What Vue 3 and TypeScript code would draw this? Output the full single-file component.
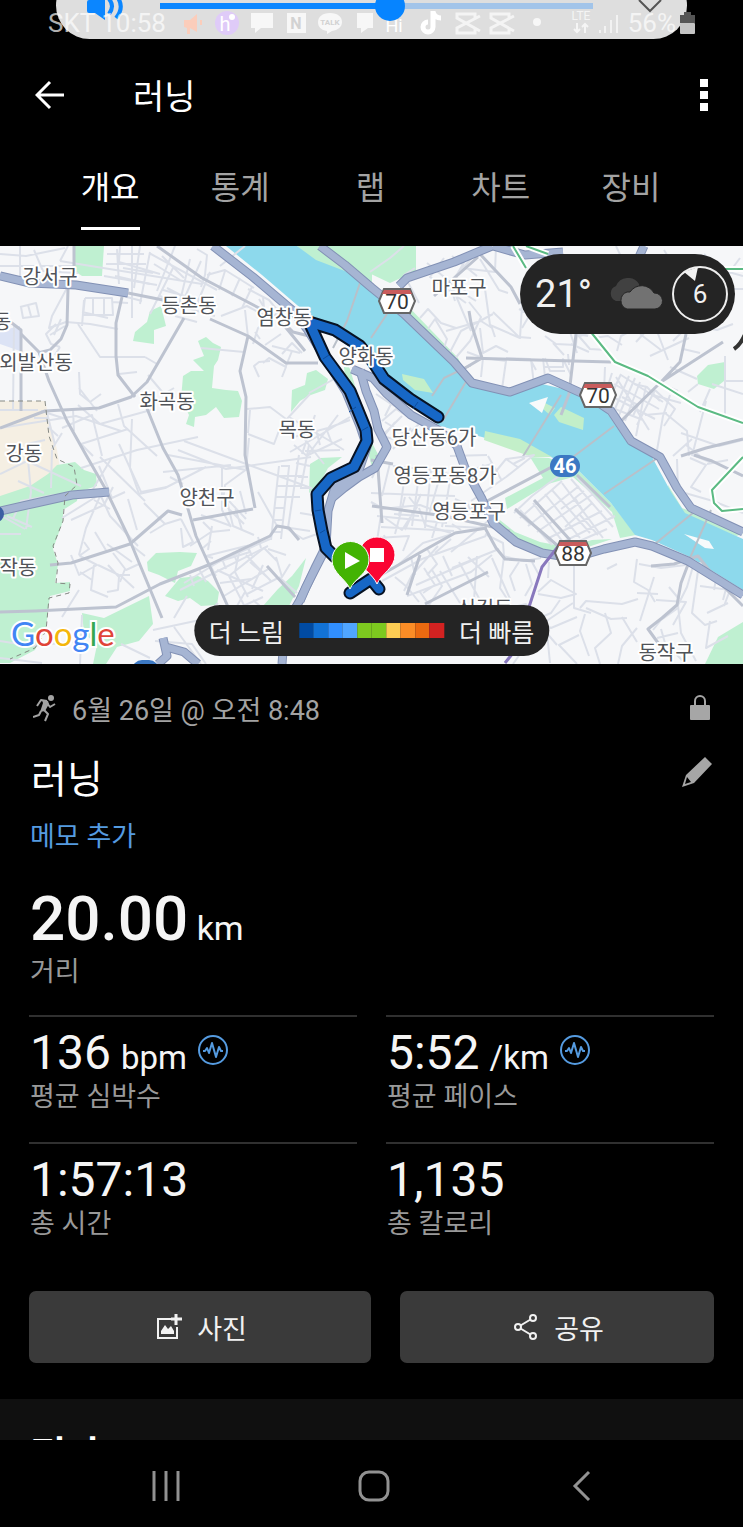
<script setup lang="ts">
import { computed, ref } from 'vue'

interface Place { x: number; y: number; name: string }
interface Stat { value: string; unit?: string; label: string; sensor?: boolean }

const tabs = ['개요', '통계', '랩', '차트', '장비']
const activeTab = ref('개요')

const volume = ref(8)
const volumeMax = 15
const volumeFill = computed(() => `${(volume.value / volumeMax) * 100}%`)

const stats: Stat[] = [
  { value: '136', unit: 'bpm', label: '평균 심박수', sensor: true },
  { value: '5:52', unit: '/km', label: '평균 페이스', sensor: true },
  { value: '1:57:13', label: '총 시간' },
  { value: '1,135', label: '총 칼로리' },
]

const paceColors = ['#014ba3', '#1272d6', '#318fff', '#50a5ff', '#7dc91f', '#7dc91f', '#fdcd53', '#fb8d26', '#eb6a10', '#d32221']

const places: Place[] = [
  { x: 50, y: 38, name: '강서구' },
  { x: 189, y: 67, name: '등촌동' },
  { x: 284, y: 79, name: '염창동' },
  { x: 2, y: 83, name: '동' },
  { x: 36, y: 124, name: '외발산동' },
  { x: 167, y: 163, name: '화곡동' },
  { x: 297, y: 191, name: '목동' },
  { x: 366, y: 118, name: '양화동' },
  { x: 459, y: 49, name: '마포구' },
  { x: 434, y: 199, name: '당산동6가' },
  { x: 24, y: 215, name: '강동' },
  { x: 207, y: 259, name: '양천구' },
  { x: 445, y: 237, name: '영등포동8가' },
  { x: 469, y: 273, name: '영등포구' },
  { x: 18, y: 329, name: '작동' },
  { x: 485, y: 370, name: '신길동' },
  { x: 666, y: 414, name: '동작구' },
]

const shields = [
  { x: 397, y: 55, n: '70' },
  { x: 598, y: 149, n: '70' },
  { x: 573, y: 307, n: '88' },
]

const parks = [
  'M74 0H104L102 30H82L73 24Z',
  'M150 65L161 60L166 80L154 84L154 98L133 95L135 86L147 76Z',
  'M198 95L206 91L213 97L221 101L218 114L214 120L212 142L226 144L238 145L242 155L239 171L224 172L216 161L206 169L195 171L194 181L186 178L189 169L181 153L183 130L191 125L204 125L193 114L204 110Z',
  'M291 166L292 144L305 139L307 127L316 124L328 133L325 144L308 150L300 155Z',
  'M297 0H372V42L350 28L316 17Z',
  'M371 0H416V25L390 37L371 28Z',
  'M697 130L708 119L725 116L724 135L714 143L698 138Z',
  'M57 219L75 216L84 224L96 228L97 240L78 246L77 255L63 264L63 275L53 303L58 318L55 337L70 336L70 345L50 350L46 382L35 404L10 417H0V250L30 240L48 228Z',
  'M147 316L156 307L180 306L197 307L191 320L178 325L175 337L159 329L148 325Z',
  'M165 350L180 332L198 330L208 335L219 346L217 359L201 360L190 352L178 355Z',
  'M82 367L104 372L149 350L153 378L139 395L117 401L106 418H93L97 399L84 387Z',
  'M310 218L320 212L342 211L328 222L321 235L309 247Z',
  'M306 312L299 340L289 360H263L278 343L292 330Z',
  'M743 376L718 391L705 418H743Z',
  'M549 212L578 224L611 257L636 289L620 292L612 266L573 231L548 238L507 263L505 252L543 232L530 211Z',
  'M496 271L515 286L540 296L567 301L592 294L612 293L570 307L525 301L500 285Z',
  'M343 113L350 123L364 170L370 193L382 216L372 221L362 184L346 139Z',
  'M400 52L458 112L466 128L453 124L395 61Z',
  'M668 239L682 262L714 274L743 288L736 290L684 269L669 250Z',
]

const minorRoads = [
  'M0 8L26 10L65 2M20 0V31M0 20H75M34 4L43 25L78 27M60 15L202 38M68 0L60 15M104 30L157 39',
  'M84 54L82 80M20 61L36 57L39 70L23 72L21 61M28 59L31 70M68 40L52 70L49 82L66 76L90 78L118 83M82 66L108 72',
  'M85 52H112L113 69H83L85 52M93 52V68M104 52V68M112 56L128 57',
  'M56 78L46 88L51 98L60 101M50 89L65 80M60 101L55 109M61 73L54 89M78 78L100 111L145 111M119 128L137 126M145 111L157 118',
  'M79 126L80 148L90 156L101 148M79 142L97 165M0 164H38M14 78L13 164M62 182L92 169L102 210M118 158L124 180L157 210M148 129L164 148L174 142M78 159L100 178L151 164',
  'M132 0V72M140 0L134 42M117 3L119 38M120 0L119 16L160 28M115 30L150 38M123 22L153 27M106 18H146M107 8H144M150 6L140 58M104 45L142 55M175 0L157 45M190 13L178 64M174 20L150 68M162 10L184 32M201 15L180 62M210 26L195 63M149 7L217 44M154 18L180 34M167 42L190 54M187 62L215 70M175 70L197 76M163 44L218 59M160 50L180 60',
  'M197 3L207 9L205 29L201 41M207 29L225 24L254 42M225 25L219 44M240 32L232 50M252 41L242 62M248 43L269 54L278 65M245 0L220 20M221 70L247 60L269 72M245 64L248 91M259 53L268 68M263 51L264 62',
  'M201 102L244 106M253 98L258 82L282 63M260 93L255 86M272 100L300 107M265 99L281 88M302 107L292 97L282 108M270 115L259 116L254 120L259 131M263 117L269 112L286 121L282 131M286 120L292 105M247 163L270 161L286 173',
  'M286 174L310 148M309 147L327 137L343 128M289 171L330 195L344 204M290 192L328 182L350 174M290 206L320 189L350 171M294 199L307 210L338 169M326 182L331 195M316 184L320 199M302 190L324 218M305 205L340 204',
  'M0 228L27 215L81 240M28 214L31 246L26 283M52 204L51 242M18 235L44 247M0 269L25 283M13 273L21 255L54 249M0 288H21M7 270L32 281',
  'M55 199L47 167M48 181L58 190M34 172H49M0 182L76 170L121 185M41 165L66 173M74 185L73 163M62 187L52 203M27 198L45 194',
  'M81 222L137 204L198 191M100 211L145 255M93 210L81 198L128 183M100 248L110 270L138 300M93 243L111 213M99 220L112 252L125 246M119 198L141 246L167 241M94 254L110 263M62 272L99 249M71 274L104 259L113 241M101 248L86 282L79 309',
  'M132 173L130 222L139 248L165 242L206 221M178 204L226 223L311 211M163 226L231 219M168 209L246 224L249 192M184 195L311 242M222 219V264L231 281M248 188L274 198L280 182M248 187L250 164M247 223L225 239L223 255M170 231L183 238',
  'M144 257L165 278L150 287M128 253L137 284M165 278L181 273M181 282L183 301L193 296L181 273M95 286L107 306M107 298L132 316M113 307L126 324L139 318M125 323L120 336M130 298L145 310',
  'M71 309L79 329L97 319L80 310M80 326L92 334M94 319L91 344L108 351M98 319L121 330L134 342M108 319L119 331L118 344L107 346M120 329L130 329M79 310L89 303L84 296',
  'M190 300L211 286L230 284M212 280L208 304M211 295L203 302M226 251L233 280L254 289M235 261L242 284M224 258L244 278M229 255L246 273M240 245L246 268M201 269L231 280M203 276L212 285M258 246L277 280L310 285',
  'M213 312L206 310L246 300L250 306L204 320M217 324L263 345M220 337L251 333M229 330L247 365M229 330L264 302L277 315M240 302L235 326L248 351M246 309L271 335M268 303L286 309M276 311L282 331L290 318M279 331L297 347M250 316L267 331',
  'M263 319L252 343M224 350L270 322M247 348L278 332M232 365L263 351M253 354L267 366M218 357L207 368M237 360L245 346',
  'M184 337L222 314L270 293M180 344L222 323L268 300M190 329L194 340M199 323L206 336M209 317L216 330M222 313L226 323M233 306L237 316M247 299L252 310M258 291L261 302',
  'M279 220L271 294M289 221L281 293M299 209L288 282M309 199L301 241M278 230H302M277 240H301M275 251H300M275 262H285M273 274H283M271 286H282M281 220H290M298 231H308M300 242H312',
  'M302 208L315 169M306 210L342 193M296 217L310 220M300 267L318 270M283 280L303 293L317 288',
  'M0 395L31 400L80 395M0 412L42 417M62 371L79 344M82 369L80 418M174 372L187 350M174 381L201 418M153 384L214 371M155 395L192 398L206 418M121 398L150 412',
  'M370 26L390 12L404 0M415 22L404 29L419 57M427 17L449 35L455 55M444 12L430 31L466 57M469 8L456 30L468 50L476 55M481 2L450 36L471 85M480 13L499 44L508 47M462 22L495 26L496 0M452 10L477 30',
  'M420 72L428 63L441 77L456 82M428 83L435 73L447 93L443 105M446 85L481 75L492 82L495 91M480 82L483 107L496 100L508 106M448 110L461 85L493 68M452 116L470 95L481 71L469 56M493 66L519 91L531 92M485 43L490 79L520 92L523 43M519 63L529 68M545 90L556 98L576 99L577 88L588 90',
  'M467 106L483 112L481 131M484 112L506 115L502 143M506 112L530 113L536 124M531 113L534 139M543 112L545 131M545 112L550 125L565 125M568 108L569 119M571 98L589 106M553 97L564 109M544 121L563 121L563 113L571 129',
  'M543 58L545 73M560 84L574 77L583 66M568 80L577 107M582 69L580 90L597 84M593 92L608 90L622 99M577 88L590 103L607 104M536 42L532 65L522 82',
  'M605 121L604 146M612 127L601 162M616 131L649 184M621 128L609 154M629 130L612 170M635 132L616 176M640 136L625 175M646 140L636 190M655 144L637 179M609 149L655 173M614 138L659 163M621 129L663 156M602 158L643 174M655 144L675 163L664 180',
  'M634 138L647 141L660 155M622 151L638 159L633 170M657 136L678 145M656 150L681 157M645 169L667 167M667 73L651 62M655 80L668 114M640 88L661 104M680 82L685 65L720 28M694 79L717 84L733 78M725 110V168M712 138L743 148M725 135H743M698 138L688 146M710 143L700 166',
  'M617 105L621 90L642 79M688 80L673 95M650 110L689 92M683 103L700 107M670 121L697 133M670 149L663 170L656 210M665 167L687 185L689 210M681 187L719 200L743 194M692 193L673 210M686 199L700 210M706 155L692 210',
  'M616 0L626 21M664 4L680 30M704 8L720 25M740 12L717 43M700 18L743 30M721 43H743M734 21L717 45M636 96L656 74M637 80L668 84',
  'M376 148L391 158L385 170M382 175L396 163L419 178L400 196M385 176L421 198M376 188L403 196M395 176L384 190M411 182L393 203M402 170L385 187M391 158L408 168M424 183L416 199',
  'M382 210L372 232M371 247L420 249L455 250M390 217L382 250M393 220L432 224L453 229M406 222L399 270M419 229L412 280M431 224L425 282M441 227L429 268M451 229L442 281',
  'M382 263L420 259L444 268M405 251L395 288M377 270L447 277M381 281L454 285M377 292L409 290L403 305M371 256L382 262L375 308M385 272L402 284L417 261L409 251M421 248L405 284M394 268L419 270M441 263L432 292M452 278L461 284',
  'M384 289L388 300L377 301M419 262L425 279L451 287M445 280L484 282M455 253L489 268M467 258L474 270M488 275L451 306',
  'M450 210L487 209M482 219L497 224L506 213M488 210L502 235M492 218L470 224M513 218L525 212M519 222L506 213L529 210L534 209L506 231L471 255',
  'M514 267L532 250L549 237L565 226M520 272L562 235M528 280L579 240M537 286L593 248M547 293L602 265M557 299L615 270M568 300L607 283M577 231L614 272M571 233L613 281M562 237L603 292M552 244L590 287M545 248L580 292M533 257L563 296M520 264L552 299M517 266L531 279M574 254L561 263M584 245L575 252L583 265M592 257L565 281M580 269L598 289',
  'M397 320L423 297L459 286M382 335L422 313L486 290M438 300L412 329L404 345M411 311L415 329M395 331L407 341L419 356M427 303L437 318L427 329M451 293L435 307M485 288L503 297L504 310',
  'M407 350L471 326L492 309M416 339L480 311M424 322L435 339L423 347M420 346L429 359L442 340L432 324M440 325L460 357M443 310L452 330M459 316L480 354M452 322L499 303M468 311L489 331M477 310L474 354',
  'M503 310L524 315L541 312M504 310L500 342L511 359M492 312L511 355M519 316L510 330L515 345M526 318L532 338L525 350M532 316L539 329M538 346L551 334L576 348L561 352L538 348M509 362L526 358L537 373L551 367L560 354M545 376L573 357M535 374L551 382L577 371',
  'M574 320V362L591 367M549 316L548 332M580 362L586 355L622 358L638 353M586 362L611 373L627 372M637 313L634 336L648 344L655 356M637 347L658 348M617 318L607 323M639 318L661 322L702 317M694 317L687 341L678 359L681 387L696 415',
  'M654 331L640 375M656 354L686 356L673 379M605 367L611 387L595 402L600 418M622 371L637 396M585 368L580 385L589 410M579 389L559 399L577 418M557 399L545 385L525 400M525 401L513 418M547 387L550 417M637 382L622 400L618 418',
  'M698 325L692 367L705 379L717 375M707 367L728 357M700 340L730 344L724 360M716 333L714 344M727 339L723 354M710 375L706 402L728 390M678 387L657 392M661 383L665 397L686 418M653 384L661 374L678 362M679 353L669 341',
  'M690 212L706 219L691 241L701 246M707 218L728 214M710 216L693 209M677 213L678 245L713 255L743 267',
]

const majorRoads = [
  'M74 0V24M21 165V84L0 68M68 43L67 79L61 93L50 104L38 107M122 51L116 77V110L118 129L135 151',
  'M21 88L39 106L49 135L67 175L86 209L105 242L128 290L162 372M146 160L163 202L178 229L196 290L229 363',
  'M128 47L163 54L180 59M184 72L147 136L131 151L99 162L45 165L0 182M157 0L202 32L278 72L305 105',
  'M210 73L248 90L286 117H318M248 90L240 125L246 151L245 209L255 262M278 71L293 86L317 92',
  'M0 366L35 365L116 361L160 338L211 318L270 290L277 280L289 282L299 294M50 319L71 317L130 298L168 265L182 269',
  'M193 274L253 263M267 320L295 351',
  'M479 7L511 41L520 58M466 112L536 114L611 116M478 11L434 50M471 77L482 112L460 125M471 77L469 65',
  'M576 88L569 148L561 169M686 88L680 116L661 136L618 178M661 136L723 96',
  'M393 218L371 214M372 260L445 270L510 285M382 277L377 209',
  'M485 282L496 302L505 313L535 315M381 329L421 306L455 287L487 282M420 309L407 349M425 358L488 326',
  'M515 263L558 300M577 229L610 261M534 254L570 294M472 263L565 214',
  'M694 209L712 215L743 230M689 316L681 337L677 359L662 372L648 383L661 401',
  'M651 320L674 318L698 310L716 333L743 360M681 210L706 202L743 193',
]

const highways = [
  'M0 30L30 37L76 39L128 47',
  'M0 265L36 257L72 249L109 246',
  'M213 0L253 31L292 64L307 83L325 112L346 146L360 180L367 201L359 224L335 241L328 265L326 300L316 320L300 354L285 380L282 418',
  'M320 0L345 19L372 42L404 68L454 116L472 137L510 146L548 132L590 151L611 165L631 195L660 211L677 242L691 262L743 286',
  'M399 40L407 32L454 16L492 0M493 0L525 9L563 6M644 0L639 11',
  'M352 123L373 132L386 147L411 169L440 185L457 200L465 222L482 253L493 277L516 296L542 307L573 312L604 303L635 296L652 300L688 315L743 349',
  'M360 124L366 145L374 165L378 183L387 201L375 222L359 231L344 242L332 252',
  'M327 300L306 341L300 355M163 392L167 410L158 418M166 401L184 406L198 418',
]

const route = 'M379 343L371 333L362 339L350 347M335 311L326 302L322 285L318 264L317 248L331 232L354 221L367 195L366 184L350 145L325 111L309 76L335 84L360 100L373 116L384 133L410 153L438 171'
</script>

<template>
  <div class="screen">
    <div class="volume">
      <svg class="speaker" viewBox="0 0 38 30" aria-hidden="true">
        <path d="M1 11Q1 9 3 9H9L19 1V29L9 22H3Q1 22 1 20Z" fill="#0b86ff" />
        <path d="M23 8Q29 15 23 23M29 3Q40 15 30 27" fill="none" stroke="#0b86ff" stroke-width="4" />
      </svg>
      <input v-model.number="volume" class="slider" type="range" min="0" :max="volumeMax" aria-label="볼륨" :style="{ '--fill': volumeFill }" />
      <button class="expand" type="button" aria-label="펼치기">
        <svg viewBox="0 0 26 14"><path d="M2 1L13 12L24 1" fill="none" stroke="#555" stroke-width="2" /></svg>
      </button>
    </div>

    <div class="status">
      <span>SKT 10:58</span>
      <svg class="notices" viewBox="0 0 364 30" aria-hidden="true">
        <path d="M2 12H8L15 6V24L8 20V26H5V20L2 19ZM18 12H20V17H18Z" fill="#fbcdbb" />
        <circle cx="45" cy="15" r="12" fill="#dfcbf8" />
        <text x="43" y="23" class="glyph thin" font-size="20">h</text>
        <circle cx="50" cy="9" r="3" fill="#fff" />
        <g fill="#fff" fill-opacity=".75">
          <path d="M69 5H91V20H79L73 25V20H69ZM175 5H191V20H186L179 25V20H175Z" />
          <rect x="105" y="5" width="19" height="20" />
          <path d="M148 5C156 5 160 9 160 14S156 22 150 23L145 26V23C139 22 136 19 136 14S140 5 148 5Z" />
        </g>
        <text x="114" y="21" class="glyph dark" font-size="16">N</text>
        <text x="148" y="17" class="glyph dark" font-size="8">TALK</text>
        <text x="212" y="24" class="glyph thin" font-size="18">Hi</text>
        <path d="M251 3V19A5 5 0 1 1 246 14M251 4Q253 10 259 10" fill="none" stroke="#fff" stroke-width="5" />
        <g fill="none" stroke="#fff" stroke-opacity=".65" stroke-width="3">
          <path d="M293 10V6H275V10L298 23M298 8L275 20V25H293V21" />
          <path d="M327 10V6H309V10L332 23M332 8L309 20V25H327V21" />
        </g>
        <circle cx="355" cy="14" r="4" fill="#fff" fill-opacity=".75" />
      </svg>
      <svg class="signal" viewBox="0 0 50 26" aria-hidden="true">
        <text x="11" y="10" class="glyph lte" font-size="12">LTE</text>
        <path d="M7 13V22M4 19L7 22L10 19M15 23V14M12 17L15 14L18 17" fill="none" stroke="#fff" stroke-opacity=".7" stroke-width="2" />
        <path d="M30 20V23M35 16V23M41 10V23M47 5V23" fill="none" stroke="#fff" stroke-opacity=".6" stroke-width="2" />
      </svg>
      <span>56%</span>
      <svg class="battery" viewBox="0 0 15 24" aria-hidden="true">
        <path d="M4 1H11V4H15V12H0V4H4Z" fill="#555" />
        <rect y="12" width="15" height="11" rx="1" fill="#c4c4c4" />
      </svg>
    </div>

    <header class="appbar">
      <button class="icon-button" type="button" aria-label="뒤로">
        <svg class="back" viewBox="0 0 30 30"><path d="M29 15H3M15 2L2 15L15 28" fill="none" stroke="#fff" stroke-width="3" /></svg>
      </button>
      <h1>러닝</h1>
      <button class="icon-button" type="button" aria-label="더보기">
        <svg class="dots" viewBox="0 0 8 34"><path d="M0 1H8V9H0ZM0 13H8V21H0ZM0 25H8V33H0Z" fill="#fff" /></svg>
      </button>
    </header>

    <nav class="tabs">
      <button v-for="tab in tabs" :key="tab" type="button" :class="{ active: tab === activeTab }" @click="activeTab = tab">
        <span>{{ tab }}</span>
      </button>
    </nav>

    <main class="content">
      <section class="map">
        <svg class="canvas" viewBox="0 0 743 418" role="img" aria-label="러닝 경로 지도">
          <rect width="743" height="418" fill="#f6f7f9" />
          <path d="M0 85L20 80V105L0 98Z" fill="#dce3f5" />
          <path d="M0 155H45L57 204L60 222L25 252L0 256Z" fill="#f5efe3" />
          <path v-for="(d, i) in parks" :key="'p' + i" :d="d" fill="#bff0d1" />
          <path d="M226 0H297L316 14L350 27L371 43L399 62L448 114L466 136L505 148L542 138L572 145L605 164L626 195L652 211L671 246L685 267L743 293V344L690 311L652 294L635 289L611 257L578 224L551 211L523 203L482 191L440 180L405 154L377 122L340 94L304 65L262 29Z" fill="#8dd9ec" />
          <path d="M402 128L424 133L433 147L415 144L403 134ZM485 185L520 193L552 211L532 211L484 194ZM561 161L584 172L583 184L559 176L554 169ZM545 157L555 162L550 169L543 163Z" fill="#c3efc9" />
          <path d="M529 157L548 151L542 167ZM684 288L709 295L714 303L705 302Z" fill="#f8fafb" />
          <g fill="none" stroke-linejoin="round">
            <path d="M360 37L347 75L333 102M387 68L371 92M471 119L444 132L432 150M467 134L442 176M561 149L522 212M614 180L573 211M699 262L655 298M711 264L690 312M659 211L604 248" stroke="#b9c0c9" stroke-width="2" />
            <path v-for="(d, i) in minorRoads" :key="'m' + i" :d="d" stroke="#dce0e9" stroke-width="2" />
            <path v-for="(d, i) in majorRoads" :key="'j' + i" :d="d" stroke="#bdc3d0" stroke-width="3" />
            <path v-for="(d, i) in highways" :key="'o' + i" :d="d" stroke="#8291b5" stroke-width="9" />
            <path v-for="(d, i) in highways" :key="'h' + i" :d="d" stroke="#a6b5d3" stroke-width="7" />
            <path d="M513 0L526 22M526 0L548 8M590 85L615 116L648 130L698 161L743 177M743 211L712 244L714 257L722 265L743 263M714 23H743" stroke="#fff" stroke-width="6" />
            <path d="M513 0L526 22M526 0L548 8M590 85L615 116L648 130L698 161L743 177M743 211L712 244L714 257L722 265L743 263M714 23H743" stroke="#5bba83" stroke-width="2" />
            <path d="M560 298L542 321L529 361L517 402L505 417" stroke="#8878bd" stroke-width="3" />
            <path d="M0 155H45L49 190L57 213L74 221L77 239L65 250L63 275L53 300L58 317L56 337L70 338L69 347L49 352L46 385L35 402L10 413" stroke="#868a85" stroke-dasharray="5 4" stroke-width="1" />
            <path :d="route" stroke="#071223" stroke-width="13" stroke-linecap="round" />
            <path :d="route" stroke="#1767c6" stroke-width="9" stroke-linecap="round" />
            <path d="M323 113L329 109M349 166L356 161M361 185L368 181M413 163L418 156M315 265L321 264M320 287L325 284" stroke="#0d4d9e" stroke-width="1" />
          </g>
          <text v-for="place in places" :key="place.name + place.x" :x="place.x" :y="place.y" class="place">{{ place.name }}</text>
          <path d="M734 103Q743 97 748 80" stroke="#333" stroke-width="4" fill="none" />
          <circle cx="-4" cy="268" r="8" fill="#3c5fa3" />

          <g v-for="shield in shields" :key="shield.n + shield.x">
            <path :d="`M${shield.x - 13} ${shield.y - 12}H${shield.x + 13}L${shield.x + 18} ${shield.y}L${shield.x + 13} ${shield.y + 12}H${shield.x - 13}L${shield.x - 18} ${shield.y}Z`" fill="#fff" stroke="#666" stroke-width="2" />
            <path :d="`M${shield.x - 13} ${shield.y - 11}H${shield.x + 13}L${shield.x + 15} ${shield.y - 7}H${shield.x - 15}Z`" fill="#c95c5c" />
            <text :x="shield.x" :y="shield.y + 8" class="route-number">{{ shield.n }}</text>
          </g>
          <rect x="550" y="209" width="30" height="22" rx="11" fill="#3c78c3" />
          <text x="565" y="227" class="route-number light">46</text>
          <rect x="132" y="414" width="27" height="20" rx="10" fill="#3c78c3" />

          <path d="M377 338C373 328 359 322 359 309A18 18 0 0 1 395 309C395 322 381 328 377 338Z" fill="#fa0533" stroke="#fff" stroke-width="1" />
          <rect x="370" y="302" width="14" height="14" fill="#fff" />
          <path d="M350 343C346 333 332 327 332 314A18 18 0 0 1 369 314C369 327 354 333 350 343Z" fill="#43b303" stroke="#fff" stroke-width="1" />
          <path d="M345 306L360 315L345 323Z" fill="#fff" />
        </svg>

        <div class="weather">
          <span>21°</span>
          <svg class="clouds" viewBox="0 0 56 32" aria-hidden="true">
            <path d="M8 23A8 8 0 0 1 8 8A13 13 0 0 1 31 6L34 23Z" fill="#414141" />
            <path d="M19 31A9 9 0 0 1 19 14H22A14 14 0 0 1 46 15A8 8 0 0 1 47 31Z" fill="#727272" stroke="#242424" stroke-width="1" />
          </svg>
          <svg class="wind" viewBox="0 0 56 56" role="img" aria-label="풍속 6">
            <circle cx="28" cy="28" r="27" fill="none" stroke="#eee" stroke-width="2" />
            <path d="M12 6L26 1L23 15Z" fill="#f2f2f2" />
            <text x="28" y="37" class="wind-number">6</text>
          </svg>
        </div>
        <div class="google"><span>G</span><span>o</span><span>o</span><span>g</span><span>l</span><span>e</span></div>
        <div class="legend">
          <span>더 느림</span>
          <span class="scale"><i v-for="(color, i) in paceColors" :key="i" :style="{ background: color }"></i></span>
          <span>더 빠름</span>
        </div>
      </section>

      <section class="summary">
        <div class="meta">
          <svg class="runner" viewBox="0 0 24 34" aria-hidden="true">
            <circle cx="18" cy="7" r="3" fill="#a3a3a3" />
            <path d="M4 15L8 9L14 10M14 12L17 16L22 13M11 19L15 23L12 30M8 20L6 24L0 26" fill="none" stroke="#a3a3a3" stroke-width="2" stroke-linejoin="round" />
            <path d="M9 9L15 10L16 13L12 20L7 21L10 12Z" fill="#a3a3a3" />
          </svg>
          <span>6월 26일 @ 오전 8:48</span>
          <svg class="lock" viewBox="0 0 20 26" role="img" aria-label="비공개">
            <path d="M5 11V6A5 5 0 0 1 15 6V11" fill="none" stroke="#a6a6a6" stroke-width="2" />
            <rect y="10" width="20" height="15" rx="1" fill="#a6a6a6" />
          </svg>
        </div>
        <div class="title-row">
          <h2>러닝</h2>
          <button class="icon-button" type="button" aria-label="편집">
            <svg class="pencil" viewBox="0 0 30 30"><path d="M23 0L30 7L12 26L0 30L4 18ZM5 20L3 27L9 25Z" fill="#a6a6a6" fill-rule="evenodd" /></svg>
          </button>
        </div>
        <a class="memo" href="#memo">메모 추가</a>

        <div class="distance">
          <p class="total"><strong>20.00</strong> <span>km</span></p>
          <p class="label">거리</p>
        </div>

        <div class="stats">
          <div v-for="stat in stats" :key="stat.label" class="stat">
            <p class="value">
              <span>{{ stat.value }}</span>
              <span v-if="stat.unit" class="unit">{{ stat.unit }}</span>
              <svg v-if="stat.sensor" class="pulse" viewBox="0 0 32 32" aria-hidden="true">
                <circle cx="16" cy="16" r="14" fill="none" stroke="#559be0" stroke-width="2" />
                <path d="M6 17H8L10 14L12 19L15 9L19 23L22 13L24 17H26" fill="none" stroke="#559be0" stroke-width="2" stroke-linejoin="round" />
              </svg>
            </p>
            <p class="label">{{ stat.label }}</p>
          </div>
        </div>

        <div class="actions">
          <button class="photo" type="button">
            <svg viewBox="0 0 26 26" aria-hidden="true">
              <path d="M15 5H2V24H21V13" fill="none" stroke="#f1f1f1" stroke-width="2" />
              <path d="M20 0V11M15 5H26" stroke="#f1f1f1" stroke-width="3" />
              <path d="M5 20V17L9 11L12 15L15 12L18 17V20Z" fill="#f1f1f1" />
            </svg>
            사진
          </button>
          <button class="share" type="button">
            <svg viewBox="0 0 26 26" aria-hidden="true">
              <path d="M5 13L20 4M5 13L20 22" stroke="#f1f1f1" stroke-width="2" />
              <g fill="#3a3a3a" stroke="#f1f1f1" stroke-width="2">
                <circle cx="5" cy="13" r="3" /><circle cx="20" cy="4" r="3" /><circle cx="20" cy="22" r="3" />
              </g>
            </svg>
            공유
          </button>
        </div>
      </section>

      <section class="rating"><h2>평가</h2></section>
    </main>

    <nav class="system">
      <button type="button" aria-label="최근 앱"><svg viewBox="0 0 32 32"><path d="M4 1V31M16 1V31M28 1V31" stroke="#929292" stroke-width="3" /></svg></button>
      <button type="button" aria-label="홈"><svg viewBox="0 0 32 32"><rect x="2" y="2" width="28" height="28" rx="9" fill="none" stroke="#929292" stroke-width="3" /></svg></button>
      <button type="button" aria-label="뒤로"><svg viewBox="0 0 32 32"><path d="M23 2L9 16L23 30" fill="none" stroke="#929292" stroke-width="3" /></svg></button>
    </nav>
  </div>
</template>

<style>
body {
  margin: 0;
  background: #000;
}
</style>

<style scoped>
.screen {
  position: relative;
  display: flex;
  flex-direction: column;
  height: 100vh;
  overflow: hidden;
  background: #000;
  color: #fff;
  font-family: Roboto, "Noto Sans CJK KR", sans-serif;
}
svg {
  display: block;
  flex: none;
}
h1, h2, p {
  margin: 0;
  font-weight: 400;
}
button {
  padding: 0;
  border: 0;
  background: none;
  color: inherit;
  font-family: inherit;
}
.volume {
  position: absolute;
  top: -28px;
  left: 56px;
  right: 56px;
  height: 67px;
  box-sizing: border-box;
  display: flex;
  align-items: center;
  padding: 0 24px 0 30px;
  border-radius: 34px;
  background: #dedede;
}
.speaker {
  width: 38px;
  height: 30px;
  margin-right: 36px;
}
.slider {
  position: relative;
  z-index: 2;
  flex: 1;
  min-width: 0;
  height: 30px;
  margin: 0 44px 0 0;
  appearance: none;
  background: linear-gradient(#0b86ff, #0b86ff) left center / var(--fill) 6px no-repeat, linear-gradient(#a2c4e9, #a2c4e9) center / 100% 6px no-repeat;
}
.slider::-webkit-slider-thumb {
  appearance: none;
  width: 30px;
  height: 30px;
  border-radius: 50%;
  background: #0684ff;
}
.expand svg {
  width: 26px;
  height: 14px;
}
.status {
  position: relative;
  z-index: 1;
  flex: none;
  display: flex;
  align-items: center;
  height: 46px;
  padding: 0 48px;
  color: rgba(255, 255, 255, 0.7);
  font-size: 26px;
}
.notices {
  width: 364px;
  height: 30px;
  margin-left: 16px;
}
.glyph {
  fill: #fff;
  font-weight: 700;
  text-anchor: middle;
}
.glyph.thin {
  font-weight: 400;
}
.glyph.dark {
  fill: #d2d2d2;
}
.glyph.lte {
  fill-opacity: 0.7;
  font-weight: 400;
}
.signal {
  width: 50px;
  height: 26px;
  margin: 0 8px 0 auto;
}
.battery {
  width: 15px;
  height: 24px;
  margin-left: 4px;
}
.appbar {
  flex: none;
  display: flex;
  align-items: center;
  height: 98px;
  padding: 0 35px;
}
.appbar h1 {
  flex: 1;
  margin-left: 68px;
  padding-top: 3px;
  font-size: 34px;
  line-height: 48px;
}
.back {
  width: 30px;
  height: 30px;
}
.dots {
  width: 8px;
  height: 34px;
}
.tabs {
  flex: none;
  display: grid;
  grid-template-columns: repeat(5, 1fr);
  height: 102px;
  padding: 0 47px 0 45px;
}
.tabs button {
  display: flex;
  align-items: center;
  justify-content: center;
  padding-bottom: 14px;
  color: #a3a3a3;
  font-size: 32px;
}
.tabs span {
  padding: 18px 0 15px;
  border-bottom: 3px solid transparent;
  line-height: 48px;
}
.tabs .active {
  color: #fff;
}
.tabs .active span {
  border-color: #fff;
}
.content {
  flex: 1;
  min-height: 0;
  overflow: hidden;
}
.map {
  position: relative;
}
.canvas {
  width: 100%;
  height: auto;
}
.place {
  fill: #505358;
  stroke: #fff;
  stroke-width: 4px;
  stroke-linejoin: round;
  paint-order: stroke;
  font-size: 20px;
  text-anchor: middle;
}
.route-number {
  fill: #333;
  font-size: 21px;
  text-anchor: middle;
}
.route-number.light {
  fill: #fff;
  font-size: 20px;
  font-weight: 700;
}
.weather {
  position: absolute;
  top: 8px;
  right: 8px;
  display: flex;
  align-items: center;
  height: 80px;
  padding: 0 7px 0 15px;
  border-radius: 40px;
  background: #242424;
  color: #f1f1f1;
  font-size: 38px;
}
.clouds {
  width: 56px;
  height: 32px;
  margin: 0 8px 0 16px;
}
.wind {
  width: 56px;
  height: 56px;
}
.wind-number {
  fill: #f1f1f1;
  font-size: 26px;
  text-anchor: middle;
}
.google {
  position: absolute;
  bottom: 11px;
  left: 11px;
  color: #4285f4;
  font-family: Lato, sans-serif;
  font-size: 33px;
  font-weight: 400;
  line-height: 40px;
  -webkit-text-stroke: 4px #fff;
  paint-order: stroke fill;
}
.google span:nth-child(2), .google span:nth-child(6) {
  color: #e04438;
}
.google span:nth-child(3) {
  color: #f4b60b;
}
.google span:nth-child(5) {
  color: #36a852;
}
.legend {
  position: absolute;
  bottom: 8px;
  left: 50%;
  display: flex;
  align-items: center;
  gap: 15px;
  height: 51px;
  padding: 0 15px;
  border-radius: 26px;
  background: #242424;
  color: #f1f1f1;
  font-size: 25px;
  white-space: nowrap;
  transform: translateX(-50%);
}
.scale {
  display: flex;
  width: 145px;
  height: 15px;
}
.scale i {
  flex: 1;
}
.summary {
  padding: 20px 29px 36px;
}
.meta {
  display: flex;
  align-items: center;
  height: 48px;
  padding: 0 4px;
  color: #a3a3a3;
  font-size: 27px;
}
.runner {
  width: 24px;
  height: 34px;
  margin-right: 15px;
}
.lock {
  width: 20px;
  height: 26px;
  margin-left: auto;
}
.title-row {
  display: flex;
  align-items: center;
  justify-content: space-between;
  height: 92px;
  padding: 0 2px;
}
.title-row h2 {
  padding-top: 3px;
  font-size: 39px;
  line-height: 56px;
}
.pencil {
  width: 30px;
  height: 30px;
  margin-top: -12px;
}
.memo {
  display: block;
  width: max-content;
  margin-left: 1px;
  color: #559be0;
  font-size: 27px;
  line-height: 26px;
  text-decoration: none;
}
.distance {
  height: 165px;
  padding: 43px 0 0 1px;
  box-sizing: border-box;
}
.total {
  line-height: 52px;
  color: #f5f5f5;
  font-size: 34px;
}
.total strong {
  font-size: 62px;
  font-weight: 500;
}
.label {
  color: #999;
  font-size: 27px;
  line-height: 36px;
}
.stats {
  display: grid;
  grid-template-columns: 1fr 1fr;
  column-gap: 29px;
}
.stat {
  height: 127px;
  padding: 10px 0 0 1px;
  box-sizing: border-box;
  border-top: 2px solid #303030;
}
.value {
  display: flex;
  align-items: baseline;
  gap: 10px;
  height: 52px;
  color: #f5f5f5;
  font-size: 48px;
  line-height: 52px;
}
.unit {
  font-size: 33px;
}
.pulse {
  width: 32px;
  height: 32px;
  align-self: flex-start;
  margin-top: 7px;
}
.actions {
  display: flex;
  gap: 29px;
  margin-top: 22px;
}
.actions button {
  display: flex;
  align-items: center;
  justify-content: center;
  gap: 15px;
  height: 72px;
  padding-left: 3px;
  border-radius: 7px;
  background: #3a3a3a;
  color: #f1f1f1;
  font-size: 27px;
}
.photo {
  flex: 12;
}
.share {
  flex: 11;
}
.actions svg {
  width: 26px;
  height: 26px;
}
.rating {
  height: 120px;
  padding: 28px 31px;
  background: #101010;
}
.rating h2 {
  font-size: 38px;
  font-weight: 700;
  line-height: 56px;
}
.system {
  display: grid;
  grid-template-columns: repeat(3, 1fr);
  flex: none;
  height: 87px;
  padding: 4px 57px 0 62px;
  box-sizing: border-box;
}
.system button {
  display: flex;
  align-items: center;
  justify-content: center;
}
.system svg {
  width: 32px;
  height: 32px;
}
</style>
